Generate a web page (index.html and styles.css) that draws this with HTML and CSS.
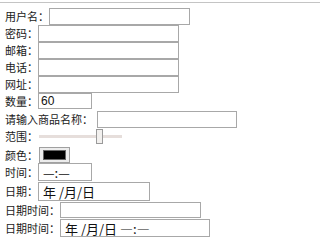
FILE: index.html
```html
<!DOCTYPE html>
<html lang="zh-CN">
<head>
<meta charset="utf-8">
<title>表单</title>
<link rel="stylesheet" href="styles.css">
</head>
<body>
<div class="rule"></div>
<form class="form">
  <div class="row"><label class="lbl">用户名：</label><input class="box w141" type="text"></div>
  <div class="row"><label class="lbl">密码：</label><input class="box w141" type="password"></div>
  <div class="row"><label class="lbl">邮箱：</label><input class="box w141" type="text"></div>
  <div class="row"><label class="lbl">电话：</label><input class="box w141" type="text"></div>
  <div class="row"><label class="lbl">网址：</label><input class="box w141" type="text"></div>
  <div class="row"><label class="lbl">数量：</label><input class="box w54 h16" type="number" value="60"></div>
  <div class="row mt2"><label class="lbl sp">请输入商品名称：</label><input class="box w140" type="text"></div>
  <div class="row h17"><label class="lbl">范围：</label><input class="range" type="range" min="0" max="100" value="75"></div>
  <div class="row mt2"><label class="lbl">颜色：</label><input class="color" type="color" value="#000000"></div>
  <div class="row"><label class="lbl">时间：</label><input class="box w54 h18 cjk" type="text" value="—:—" readonly></div>
  <div class="row mt1"><label class="lbl">日期：</label><input class="box w112 h19 cjk" type="text" value="年 /月/日" readonly></div>
  <div class="row mt1"><label class="lbl">日期时间：</label><input class="box w141 h16" type="text"></div>
  <div class="row mt1"><label class="lbl">日期时间：</label><input class="box w150 h18 cjk" type="text" value="年 /月/日 —:—" readonly></div>
</form>
</body>
</html>
```

FILE: styles.css
```css
html, body {
  margin: 0;
  padding: 0;
  background: #ffffff;
}

body {
  font-family: "Noto Sans CJK SC", "Liberation Sans", sans-serif;
  font-size: 11px;
  color: #1a1a1a;
}

.rule {
  margin-top: 2px;
  border-top: 1px solid #c4c4c4;
}

.form {
  display: flex;
  flex-direction: column;
  align-items: flex-start;
  padding: 5px 0 0 5px;
}

.row {
  display: flex;
  align-items: center;
}

.lbl {
  font-size: 11px;
  line-height: 15px;
  margin-right: 0;
  white-space: nowrap;
}

.lbl.sp {
  margin-right: 4px;
}

.mt1 { margin-top: 1px; }
.mt2 { margin-top: 2px; }
.h17 { height: 17px; }

.box {
  box-sizing: border-box;
  height: 17px;
  margin: 0;
  padding: 0 2px;
  border: 1px solid #a8a8a8;
  background: #ffffff;
  font-family: "Liberation Sans", "Noto Sans CJK SC", sans-serif;
  font-size: 12px;
  color: #111111;
  outline: none;
}

.box.cjk {
  font-family: "Noto Sans CJK SC", sans-serif;
  font-size: 13px;
  padding-left: 4px;
}

.box::-webkit-inner-spin-button,
.box::-webkit-outer-spin-button {
  -webkit-appearance: none;
  margin: 0;
}

.w54 { width: 54px; }
.w112 { width: 112px; }
.w140 { width: 140px; }
.w141 { width: 141px; }
.w150 { width: 150px; }
.h16 { height: 16px; }
.h18 { height: 18px; }
.h19 { height: 19px; }

.range {
  -webkit-appearance: none;
  appearance: none;
  width: 83px;
  height: 15px;
  margin: 0 0 0 1px;
  padding: 0;
  background: transparent;
}

.range::-webkit-slider-runnable-track {
  height: 3px;
  background: #e6dedb;
  border: none;
}

.range::-webkit-slider-thumb {
  -webkit-appearance: none;
  width: 7px;
  height: 15px;
  margin-top: -6px;
  box-sizing: border-box;
  border: 1px solid #9a9a9a;
  background: #f2f0ee;
}

.color {
  -webkit-appearance: none;
  appearance: none;
  box-sizing: border-box;
  width: 31px;
  height: 16px;
  margin: 0 0 0 1px;
  padding: 2px 3px;
  border: 1px solid #a0a0a0;
  background: #ececec;
}

.color::-webkit-color-swatch-wrapper {
  padding: 0;
}

.color::-webkit-color-swatch {
  border: 1px solid #666666;
}
```
